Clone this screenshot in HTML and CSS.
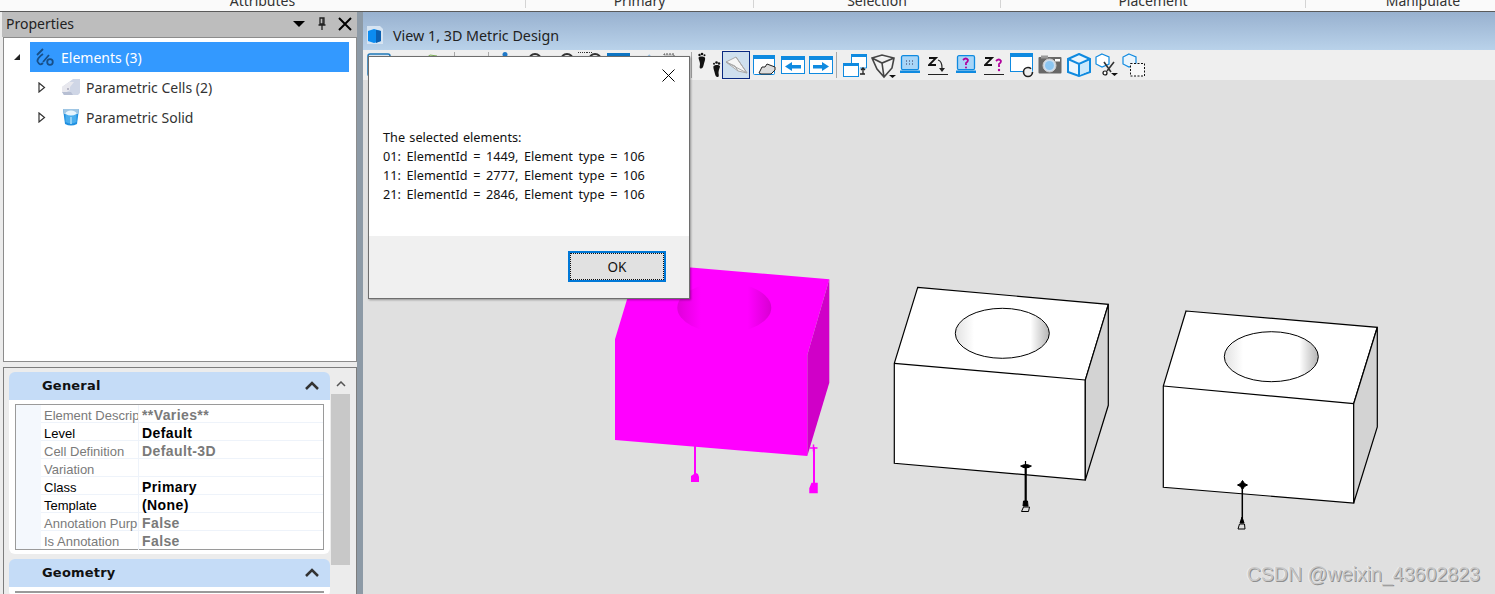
FILE: index.html
```html
<!DOCTYPE html>
<html lang="en">
<head>
<meta charset="utf-8">
<title>Properties - View 1, 3D Metric Design</title>
<link rel="stylesheet" href="styles.css">
</head>
<body>
<header class="ribbon">
  <div class="group g1"><span>Attributes</span></div>
  <div class="group g2"><span>Primary</span></div>
  <div class="group g3"><span>Selection</span></div>
  <div class="group g4"><span>Placement</span></div>
  <div class="group g5"><span>Manipulate</span></div>
</header>
<div class="main">
  <aside class="panel">
    <div class="panel-title">
      <span class="panel-name">Properties</span>
      <svg class="pt-menu" width="12" height="6" viewBox="0 0 12 6"><path d="M0 0h12L6 6z" fill="#000"/></svg>
      <svg class="pt-pin" width="10" height="14" viewBox="0 0 10 14"><path d="M3 1h4v6H3zM1.500 8h7M5 8v5" fill="none" stroke="#222" stroke-width="1.300"/><path d="M6 1v6" stroke="#222" stroke-width="1.300"/></svg>
      <svg class="pt-close" width="14" height="14" viewBox="0 0 14 14"><path d="M1 1l12 12M13 1L1 13" stroke="#000" stroke-width="2"/></svg>
    </div>
    <div class="tree">
      <div class="tree-row">
        <svg class="twisty" width="8" height="8" viewBox="0 0 8 8"><path d="M7 1v6H1z" fill="#222"/></svg>
        <div class="tree-sel">
          <svg class="tree-ico" width="20" height="20" viewBox="0 0 20 20"><path d="M2 8L8 2M3 15c-2-2 2-6 5-8M8 15l6-7" fill="none" stroke="#174f88" stroke-width="1.800"/><circle cx="15" cy="15" r="2.800" fill="none" stroke="#174f88" stroke-width="1.800"/><path d="M3 15c1 3 3 3 5 1" fill="none" stroke="#174f88" stroke-width="1.800"/></svg>
          <span>Elements (3)</span>
        </div>
      </div>
      <div class="tree-row child">
        <svg class="twisty" width="8" height="11" viewBox="0 0 8 11"><path d="M1 1l5.500 4.500L1 10z" fill="#fff" stroke="#333" stroke-width="1.200"/></svg>
        <svg class="tree-ico2" width="20" height="18" viewBox="0 0 20 18"><path d="M1 9l7-5 4-3h7v14l-2 2H3l-2-3z" fill="#cfd6e6"/><path d="M1 9l7-5 5 0-4 5v3l-5 3-3-1z" fill="#e8e8ee"/><path d="M3 17l-2-3h9l2 3z" fill="#b7bfd3"/><circle cx="7" cy="11" r="1" fill="#aab"/></svg>
        <span>Parametric Cells (2)</span>
      </div>
      <div class="tree-row child">
        <svg class="twisty" width="8" height="11" viewBox="0 0 8 11"><path d="M1 1l5.500 4.500L1 10z" fill="#fff" stroke="#333" stroke-width="1.200"/></svg>
        <svg class="tree-ico2" width="20" height="18" viewBox="0 0 20 18"><path d="M2 1h16l-2 15q-6 3-12 0z" fill="#1f8fe0"/><path d="M2 1h16l-.6 5H2.600z" fill="#9fc6e4"/><ellipse cx="10" cy="5.500" rx="5.500" ry="3" fill="#e8f5fd"/><path d="M4.500 6v8q5.500 3 11 0V6q-5.500 3-11 0z" fill="#4aaeee"/><path d="M9 9h2v7H9z" fill="#8fd0f6"/></svg>
        <span>Parametric Solid</span>
      </div>
    </div>
    <div class="props">
      <div class="props-scroll">
        <section class="card">
          <div class="card-head">
            <span>General</span>
            <svg width="14" height="9" viewBox="0 0 14 9"><path d="M1 8l6-6 6 6" fill="none" stroke="#333" stroke-width="2.500"/></svg>
          </div>
          <div class="card-body">
            <div class="grid">
              <div class="row dim"><span class="k">Element Descrip</span><span class="v">**Varies**</span></div>
              <div class="row"><span class="k">Level</span><span class="v">Default</span></div>
              <div class="row dim"><span class="k">Cell Definition</span><span class="v">Default-3D</span></div>
              <div class="row dim"><span class="k">Variation</span><span class="v"></span></div>
              <div class="row"><span class="k">Class</span><span class="v">Primary</span></div>
              <div class="row"><span class="k">Template</span><span class="v">(None)</span></div>
              <div class="row dim"><span class="k">Annotation Purp</span><span class="v">False</span></div>
              <div class="row dim"><span class="k">Is Annotation</span><span class="v">False</span></div>
            </div>
          </div>
        </section>
        <section class="card">
          <div class="card-head">
            <span>Geometry</span>
            <svg width="14" height="9" viewBox="0 0 14 9"><path d="M1 8l6-6 6 6" fill="none" stroke="#333" stroke-width="2.500"/></svg>
          </div>
          <div class="card-body"><div class="grid"></div></div>
        </section>
      </div>
      <div class="scrollbar">
        <svg class="sb-up" width="10" height="6" viewBox="0 0 10 6"><path d="M1 5l4-4 4 4" fill="none" stroke="#555" stroke-width="1.500"/></svg>
        <div class="sb-thumb"></div>
      </div>
    </div>
  </aside>
  <div class="divider"></div>
  <section class="view">
    <div class="view-title">
      <svg class="view-ico" width="20" height="20" viewBox="0 0 20 20"><path d="M2 1h13l3 3v15H2z" fill="#d6e4f2"/><path d="M3 6l6-2 7 2v10l-7 2-6-2z" fill="#0c8cf0"/><path d="M11 5l5 1v10l-5 2z" fill="#0b5fb0"/></svg>
      <span>View 1, 3D Metric Design</span>
    </div>
    <div class="toolbar">
      <svg class="tb i-a" width="24" height="26" viewBox="0 0 24 26"><rect x="1" y="3" width="22" height="22" rx="2" fill="#dfe9f3" stroke="#1f78b8" stroke-width="1.500"/></svg>
      <svg class="tb i-b" width="16" height="26" viewBox="0 0 16 26"><path d="M2 8l5-4 7 1v6H2z" fill="#e8f2dc" stroke="#7fb05a"/></svg>
      <i class="sep s-a"></i>
      <i class="sep s-b"></i>
      <svg class="tb i-c" width="10" height="26" viewBox="0 0 10 26"><circle cx="5" cy="3.500" r="2.500" fill="#1f78c8"/></svg>
      <svg class="tb i-d" width="16" height="26" viewBox="0 0 16 26"><circle cx="8" cy="9" r="6" fill="none" stroke="#333" stroke-width="2"/></svg>
      <svg class="tb i-d2" width="28" height="26" viewBox="0 0 28 26"><circle cx="8" cy="9" r="6" fill="none" stroke="#333" stroke-width="2"/><path d="M19 1.500h9" stroke="#333" stroke-dasharray="1 1"/></svg>
      <svg class="tb i-e" width="16" height="26" viewBox="0 0 16 26"><path d="M0 1.500h6" stroke="#333" stroke-dasharray="1 1"/><circle cx="8" cy="9" r="6" fill="none" stroke="#333" stroke-width="2"/></svg>
      <svg class="tb i-f" width="23" height="26" viewBox="0 0 23 26"><rect y="2" width="23" height="8" fill="#0d75c4"/></svg>
      <svg class="tb i-g" width="14" height="26" viewBox="0 0 14 26"><path d="M2 10l6-6M8 10l4-4" stroke="#9cc3e4" stroke-width="2"/></svg>
      <svg class="tb i-h" width="14" height="26" viewBox="0 0 14 26"><path d="M2 10V3h10v7" fill="#ccc" stroke="#555" stroke-dasharray="2 1"/></svg>
      <i class="sep s-c"></i>
      <svg class="tb i-feet" width="24" height="26" viewBox="0 0 24 26"><path d="M1.500 5.500c1-1.500 5-1.500 6.500 0 .5 2-.5 4-1 6l-.5 2c-.5 2-1.500 3.500-3 3-1.500-.5-.5-3-.5-4.500 0-2.500-1.500-4.500-1.500-6.500z" fill="#111"/><circle cx="2.500" cy="3" r="1.200" fill="#111"/><circle cx="5" cy="2" r="1.300" fill="#111"/><circle cx="7.500" cy="3.200" r="1" fill="#111"/><path d="M23 14c-1-1.500-5-1.500-6.500 0-.5 2 .5 4 1 6l.5 2c.5 2 1.500 3.500 3 3 1.500-.5.500-3 .5-4.500 0-2.500 1.500-4.500 1.500-6.500z" fill="#111"/><circle cx="22" cy="11.500" r="1.200" fill="#111"/><circle cx="19.500" cy="10.500" r="1.300" fill="#111"/><circle cx="17" cy="11.700" r="1" fill="#111"/></svg>
      <span class="tb-on">
        <svg width="26" height="26" viewBox="0 0 26 26"><path d="M3 10L13 5l11 16-9-2z" fill="#f6f6f6" stroke="#a9a9a9"/><path d="M3 10l21 11M13 5l11 16M3 10l9 4 3 5" fill="none" stroke="#a9a9a9"/></svg>
      </span>
      <svg class="tb i-win" width="23" height="21" viewBox="0 0 23 21"><rect x=".5" y=".5" width="21" height="19" rx="1" fill="#fff" stroke="#0f8ae0"/><path d="M0 0h22v4H0z" fill="#0f8ae0"/><path d="M6 18l3-6h3l2-3 8 3v3l-4 4H8z" fill="#dcdcdc" stroke="#222"/></svg>
      <svg class="tb i-arr" width="24" height="18" viewBox="0 0 24 18"><rect x=".5" y=".5" width="23" height="17" fill="#fff" stroke="#0f8ae0"/><rect width="24" height="4" fill="#0f8ae0"/><path d="M4 10.500l7-4.500v3h9v3.500h-9V15z" fill="#0f8ae0"/></svg>
      <svg class="tb i-arr2" width="24" height="18" viewBox="0 0 24 18"><rect x=".5" y=".5" width="23" height="17" fill="#fff" stroke="#0f8ae0"/><rect width="24" height="4" fill="#0f8ae0"/><path d="M20 10.500L13 6v3H4v3.500h9V15z" fill="#0f8ae0"/></svg>
      <i class="sep s-d"></i>
      <svg class="tb i-two" width="24" height="23" viewBox="0 0 24 23"><path d="M8.500 10V.5h15V14H17" fill="#fff" stroke="#0f8ae0"/><rect x="8" width="16" height="3" fill="#0f8ae0"/><rect x=".5" y="9.500" width="15" height="13" fill="#fff" stroke="#0f8ae0"/><rect y="9" width="16" height="3" fill="#0f8ae0"/><path d="M20 20v-5M18 16l2-2 2 2M17 20h5" fill="none" stroke="#222" stroke-width="1.300"/></svg>
      <svg class="tb i-tri" width="26" height="25" viewBox="0 0 26 25"><path d="M1 4l10-3 12 3-2 10-8 9-7-8zM1 4l10 5 12-5M11 9l2 14" fill="#f3f3f3" stroke="#444" stroke-width="1.600"/><path d="M18 21h7l-3.500 3z" fill="#111"/></svg>
      <svg class="tb i-lap" width="20" height="18" viewBox="0 0 20 18"><rect x="1.500" y=".7" width="17" height="14" rx="1.500" fill="#a8d5f7" stroke="#0f8ae0" stroke-width="1.300"/><path d="M0 15.500h20V18H0z" fill="#0f8ae0"/><path d="M6 6h1M9 6h1M12 6h1M6 9h1M9 9h1M12 9h1" stroke="#335"/></svg>
      <svg class="tb i-zd" width="20" height="18" viewBox="0 0 20 18"><path d="M0 17.500h20" stroke="#222"/><path d="M1 1h7L1 8h7" fill="none" stroke="#111" stroke-width="1.800"/><path d="M10 3q4 1 4 8" fill="none" stroke="#222" stroke-width="1.200"/><path d="M11 11h6l-3 4z" fill="#222"/></svg>
      <svg class="tb i-lap2" width="20" height="18" viewBox="0 0 20 18"><rect x="1.500" y=".7" width="17" height="14" rx="1.500" fill="#a8d5f7" stroke="#0f8ae0" stroke-width="1.300"/><path d="M0 15.500h20V18H0z" fill="#0f8ae0"/><path d="M7 5q3-3 5 0 0 2-2 3v2" fill="none" stroke="#b0009c" stroke-width="1.800"/><circle cx="10" cy="12.500" r="1" fill="#b0009c"/></svg>
      <svg class="tb i-zq" width="20" height="18" viewBox="0 0 20 18"><path d="M0 17.500h20" stroke="#222"/><path d="M1 1h7L1 8h7" fill="none" stroke="#111" stroke-width="1.800"/><path d="M12 4q3-3 5 0 0 2-2 3v3" fill="none" stroke="#b0009c" stroke-width="1.800"/><circle cx="15" cy="13" r="1.200" fill="#b0009c"/></svg>
      <svg class="tb i-rot" width="24" height="25" viewBox="0 0 24 25"><rect x=".5" y=".5" width="22" height="18" fill="#fff" stroke="#0f8ae0"/><rect width="23" height="4" fill="#0f8ae0"/><circle cx="18" cy="19" r="4.500" fill="#efefef" stroke="#222" stroke-width="1.600" stroke-dasharray="24 6"/></svg>
      <svg class="tb i-cam" width="24" height="19" viewBox="0 0 24 19"><rect x=".5" y="2" width="23" height="16.500" rx="1" fill="#686868"/><rect x="3" y=".5" width="7" height="3" fill="#999"/><rect x="17" y="4" width="5" height="2.500" fill="#fff"/><circle cx="11.500" cy="10.500" r="6.500" fill="#cde" stroke="#ccc"/><circle cx="11.500" cy="10.500" r="4.500" fill="#8cc6f2"/></svg>
      <svg class="tb i-cube" width="24" height="24" viewBox="0 0 24 24"><path d="M12 1l11 5v13l-11 4L1 19V6z" fill="#eaf5fd" stroke="#0f8ae0" stroke-width="2"/><path d="M13 12l9-4v10l-9 4z" fill="#cbe8fb"/><path d="M1 6l11 5 11-5M12 11v12" fill="none" stroke="#0f8ae0" stroke-width="2"/></svg>
      <svg class="tb i-cut" width="24" height="25" viewBox="0 0 24 25"><path d="M7 1l7 3v7l-7 3-6-3V4z" fill="#fff" stroke="#0f8ae0" stroke-width="1.200"/><path d="M9 9l7 10M19 9l-7 9" stroke="#333" stroke-width="1.600"/><circle cx="10" cy="20" r="2" fill="#fff" stroke="#111" stroke-width="1.200"/><path d="M16 20h7l-3.500 3z" fill="#111"/></svg>
      <svg class="tb i-marq" width="24" height="24" viewBox="0 0 24 24"><path d="M7 1l7 3v7l-7 3-6-3V4z" fill="#eaf5fd" stroke="#0f8ae0" stroke-width="1.200"/><rect x="8.500" y="10.500" width="14" height="12.500" fill="#f8f8f8" stroke="#111" stroke-dasharray="2 1.500"/></svg>
    </div>
    <div class="canvas">
      <svg class="scene" width="1132" height="514" viewBox="363 80 1132 514">
        <defs>
          <linearGradient id="holeW" x1="0" x2="1" y1="0" y2="0">
            <stop offset="0" stop-color="#e2e2e2"/><stop offset=".2" stop-color="#fff"/><stop offset=".8" stop-color="#fff"/><stop offset="1" stop-color="#b4b4b4"/>
          </linearGradient>
          <linearGradient id="holeM" x1="0" x2="1" y1="0" y2="0">
            <stop offset="0" stop-color="#e000da"/><stop offset=".25" stop-color="#ff00ff"/><stop offset=".75" stop-color="#ff00ff"/><stop offset="1" stop-color="#d800d2"/>
          </linearGradient>
        </defs>
        <g>
          <path d="M638 263L829.300 279.300 807.300 355V456L615 440V339.300z" fill="#ff00ff"/>
          <path d="M829.300 279.300V382.700L807.300 456V355z" fill="#d000c8"/>
          <ellipse cx="724.300" cy="307.700" rx="47" ry="25" fill="url(#holeM)"/>
          <path d="M695 446v30M814 447v38" stroke="#ff00ff" stroke-width="2"/>
          <path d="M691 482v-6l3-2 2-1 2 1 1 3v5z" fill="#ff00ff"/>
          <path d="M810 492.500v-4l2-5h5v9zM809.500 448h8M813.500 444.500v7" stroke="#ff00ff" fill="#ff00ff" stroke-width="1.500"/>
        </g>
        <g>
          <path d="M917.700 287.300L1108.300 304.300 1085.300 380V480L894.300 463.300V363.300z" fill="#fff" stroke="#000" stroke-width="1.200"/>
          <path d="M1108.300 304.300V405.300L1085.300 480V380z" fill="#d3d3d3" stroke="#000" stroke-width="1.200"/>
          <path d="M894.300 363.300L1085.300 380" stroke="#000" stroke-width="1.200"/>
          <ellipse cx="1002.300" cy="333.300" rx="47" ry="25" fill="url(#holeW)" stroke="#000" stroke-width="1"/>
          <path d="M1025.700 466v36" stroke="#000" stroke-width="2.200"/>
          <path d="M1021 466q5-3 10 0-5 3.500-10 0zM1025.500 461v5" fill="#000" stroke="#000" stroke-width="1.200"/>
          <path d="M1023 506l.5-5h4l.5 5z" fill="#000" stroke="#000"/>
          <path d="M1023.500 507h6l-1 4.500h-7z" fill="#ddd" stroke="#000"/>
        </g>
        <g>
          <path d="M1186 311L1377.300 327.300 1353.700 403.700V503L1163.300 487.300V386z" fill="#fff" stroke="#000" stroke-width="1.200"/>
          <path d="M1377.300 327.300V427L1353.700 503V403.700z" fill="#d3d3d3" stroke="#000" stroke-width="1.200"/>
          <path d="M1163.300 386L1353.700 403.700" stroke="#000" stroke-width="1.200"/>
          <ellipse cx="1271.300" cy="356.700" rx="47" ry="25" fill="url(#holeW)" stroke="#000" stroke-width="1"/>
          <path d="M1242.300 485v37" stroke="#000" stroke-width="1.500"/>
          <path d="M1237.500 485l3-1.500 2-3 2 3 3 1.500-3 1.500-2 3-2-3zM1240 523l2-6 2 6z" fill="#000" stroke="#000"/>
          <path d="M1239.500 524h5l.5 5h-7z" fill="#ddd" stroke="#000"/>
        </g>
      </svg>
      <div class="watermark">CSDN @weixin_43602823</div>
    </div>
    <div class="dialog">
      <div class="dlg-top">
        <svg width="13" height="13" viewBox="0 0 13 13"><path d="M.5.500l12 12M12.500.500l-12 12" stroke="#000"/></svg>
      </div>
      <div class="dlg-msg">
        <div class="dlg-lead">The selected elements:</div>
        <div>01: ElementId = 1449, Element type = 106</div>
        <div>11: ElementId = 2777, Element type = 106</div>
        <div>21: ElementId = 2846, Element type = 106</div>
      </div>
      <div class="dlg-foot"><button class="ok" type="button">OK</button></div>
    </div>
  </section>
</div>
</body>
</html>
```

FILE: styles.css
```css
* { box-sizing: border-box; }
html, body { margin: 0; height: 100%; }
body {
  width: 1495px;
  height: 594px;
  overflow: hidden;
  display: flex;
  flex-direction: column;
  background: #f0f0f0;
  font-family: "Noto Sans", "Liberation Sans", sans-serif;
}
.ribbon {
  height: 12px;
  flex: none;
  display: flex;
  overflow: hidden;
  background: #fafafa;
  border-bottom: 1px solid #5a5a5a;
  font-size: 14px;
  color: #333;
}
.group { height: 8px; text-align: center; border-right: 1px solid #d4d4d4; flex: none; }
.group span { display: block; line-height: 14px; margin-top: -6px; }
.g1 { width: 526px; }
.g2 { width: 228px; }
.g3 { width: 247px; }
.g4 { width: 305px; }
.g5 { width: 234px; border-right: 0; }

.main { flex: 1; display: flex; position: relative; min-height: 0; }

.panel {
  width: 357px;
  flex: none;
  display: flex;
  flex-direction: column;
  background: #ececec;
  padding: 0 0 0 3px;
  overflow: hidden;
}
.panel-title {
  height: 25px;
  flex: none;
  display: flex;
  align-items: center;
  background: #bdbdbd;
  margin: 0 0 0 -1px;
  padding: 0 5px 2px 4px;
  font-size: 14px;
  color: #222;
}
.panel-name { flex: 1; }
.pt-menu { margin-right: 12px; }
.pt-pin { margin-right: 11px; }

.tree {
  height: 325px;
  flex: none;
  background: #fff;
  border: 1px solid #8c8c8c;
  padding-top: 4px;
  font-size: 14px;
  color: #333;
}
.tree-row { height: 30px; display: flex; align-items: center; padding-left: 9px; }
.twisty { flex: none; margin-right: 9px; }
.tree-sel {
  width: 319px;
  height: 30px;
  display: flex;
  align-items: center;
  background: #3399ff;
  color: #fff;
}
.tree-ico { margin: 0 6px 0 5px; flex: none; }
.child { padding-left: 34px; }
.child .twisty { margin-right: 15px; }
.tree-ico2 { margin-right: 5px; flex: none; }

.props {
  flex: 1;
  min-height: 0;
  display: flex;
  margin-top: 5px;
  background: #ececec;
  border-top: 1px solid #7d7d7d;
  border-left: 1px solid #7d7d7d;
  border-right: 1px solid #7d7d7d;
  padding: 4px 5px 0 5px;
  gap: 1px;
  overflow: hidden;
}
.props-scroll { width: 321px; flex: none; display: flex; flex-direction: column; gap: 5px; }
.card { flex: none; }
.card-head {
  height: 28px;
  display: flex;
  align-items: center;
  justify-content: space-between;
  padding: 0 11px 2px 33px;
  background: #c5dcf7;
  border-radius: 6px 6px 0 0;
  font-family: "DejaVu Sans", sans-serif;
  font-weight: 700;
  font-size: 13px;
  letter-spacing: .2px;
  color: #111;
}
.card-body {
  background: #fff;
  border-radius: 0 0 6px 6px;
  padding: 4px 6px;
}
.grid {
  border: 1px solid #9a9a9a;
  font-family: "Liberation Sans", sans-serif;
  font-size: 13px;
  color: #000;
}
.row {
  height: 18px;
  display: grid;
  grid-template-columns: 98px 1fr;
  margin-left: 25px;
  border-bottom: 1px solid #eef3fa;
  line-height: 18px;
  box-shadow: -25px 0 0 #f4f8fd;
}
.row:last-child { border-bottom: 0; }
.k { padding: 2px 0 0 3px; overflow: hidden; white-space: nowrap; border-right: 1px solid #eef3fa; }
.v { padding: 1px 0 0 3px; font-weight: 700; font-size: 14px; letter-spacing: .4px; }
.dim { color: #7a7a7a; }

.scrollbar {
  width: 19px;
  flex: none;
  background: #ececec;
  display: flex;
  flex-direction: column;
  align-items: center;
}
.sb-up { margin-top: 9px; }
.sb-thumb { width: 19px; height: 171px; margin-top: 7px; background: #c8c8c8; }

.divider { width: 6px; flex: none; background: #8d9aa6; }

.view { flex: 1; min-width: 0; display: flex; flex-direction: column; position: relative; }
.view-title {
  height: 38px;
  flex: none;
  display: flex;
  align-items: center;
  padding: 8px 0 0 2px;
  background: linear-gradient(#98b1cf, #b9d2ea);
  font-size: 14.300px;
  color: #222;
}
.view-ico { margin-right: 8px; }
.toolbar {
  height: 30px;
  flex: none;
  display: flex;
  align-items: flex-start;
  background: #efefef;
  padding-top: 1px;
}
.tb { flex: none; }
.sep { width: 1px; height: 26px; margin-top: 1px; background: #a8a8a8; flex: none; }
.i-a { margin-left: 4px; }
.i-b { margin-left: 32px; }
.s-a { margin-left: 15px; }
.s-b { margin-left: 33px; }
.i-c { margin-left: 11px; }
.i-d { margin-left: 17px; }
.i-d2 { margin-left: 16px; }
.i-f { margin-left: 4px; }
.i-g { margin-left: 12px; }
.i-h { margin-left: 6px; }
.s-c { margin-left: 15px; }
.i-feet { margin-left: 5px; margin-top: 1px; margin-right: -2px; }
.tb-on {
  width: 28px;
  height: 28px;
  margin-left: 3px;
  background: #cfe0ee;
  border: 1px solid #0a2a80;
  flex: none;
  display: block;
}
.tb-on svg { display: block; }
.i-win { margin-left: 3px; margin-top: 4px; }
.i-arr { margin-left: 5px; margin-top: 5px; }
.i-arr2 { margin-left: 4px; margin-top: 5px; }
.s-d { margin-left: 3px; }
.i-two { margin-left: 6px; margin-top: 3px; }
.i-tri { margin-left: 4px; margin-top: 3px; }
.i-lap { margin-left: 3px; margin-top: 4px; }
.i-zd { margin-left: 8px; margin-top: 6px; }
.i-lap2 { margin-left: 8px; margin-top: 4px; }
.i-zq { margin-left: 8px; margin-top: 6px; }
.i-rot { margin-left: 6px; margin-top: 2px; }
.i-cam { margin-left: 4px; margin-top: 4px; }
.i-cube { margin-left: 5px; margin-top: 2px; }
.i-cut { margin-left: 4px; margin-top: 2px; }
.i-marq { margin-left: 3px; margin-top: 2px; }

.canvas { flex: 1; min-height: 0; position: relative; background: #e0e0e0; overflow: hidden; }
.scene { display: block; }
.watermark {
  position: absolute;
  right: 15px;
  bottom: 8px;
  font-family: "Liberation Sans", sans-serif;
  font-size: 19.600px;
  color: #c8c8c8;
  text-shadow: 1px 1px 0 #8f8f8f, -1px 0 0 #f0f0f0;
  white-space: nowrap;
}

.dialog {
  position: absolute;
  left: 5px;
  top: 44px;
  width: 322px;
  height: 243px;
  display: flex;
  flex-direction: column;
  background: #fff;
  border: 1px solid #6e6e6e;
  box-shadow: 1px 1px 2px rgba(0, 0, 0, .35);
  font-size: 12.700px;
  color: #111;
}
.dlg-top { height: 36px; flex: none; display: flex; justify-content: flex-end; align-items: center; padding: 0 14px 0 0; }
.dlg-msg { height: 143px; flex: none; padding: 35px 0 0 14px; line-height: 19px; word-spacing: 2.300px; }
.dlg-lead { word-spacing: 1px; }
.dlg-foot { flex: 1; background: #f0f0f0; display: flex; justify-content: flex-end; align-items: flex-start; padding: 15px 23px 0 0; }
.ok {
  width: 98px;
  height: 31px;
  background: #e1e1e1;
  border: 2px solid #0078d7;
  outline: 1px dotted #111;
  outline-offset: -3px;
  font-family: inherit;
  font-size: 13.500px;
  color: #111;
  padding: 1px 0 0;
}
```
